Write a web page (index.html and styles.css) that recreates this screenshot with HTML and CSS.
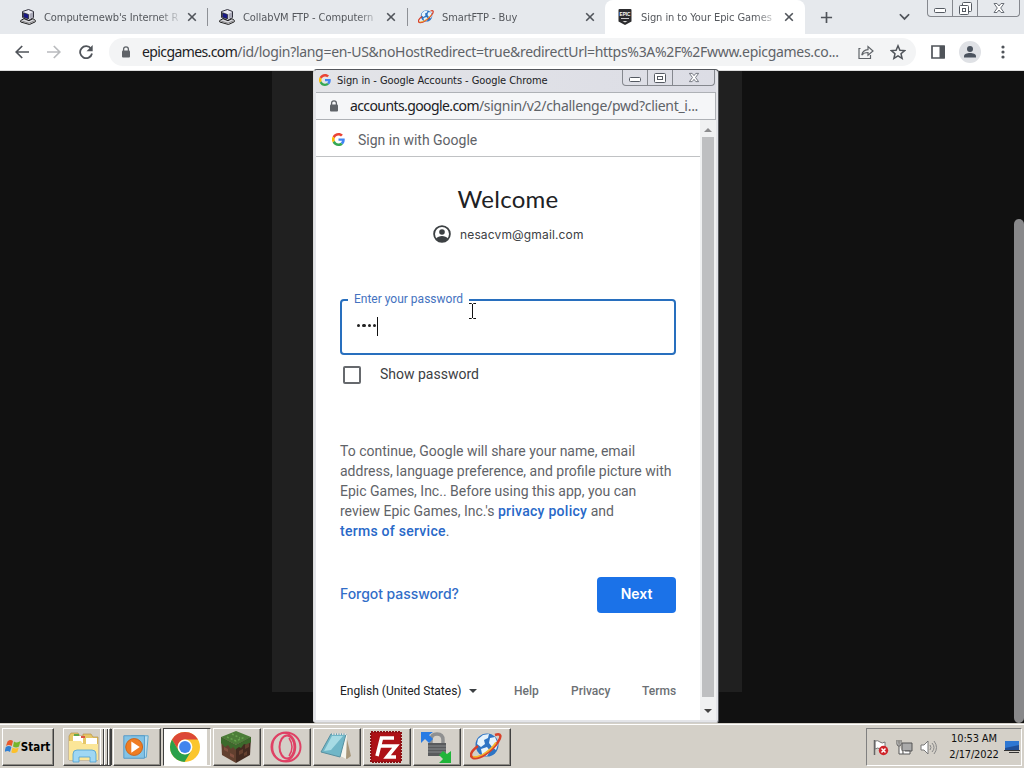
FILE: index.html
```
<!DOCTYPE html>
<html lang="en">
<head>
  <meta charset="utf-8">
  <title>Sign in to Your Epic Games Account</title>
  <link rel="stylesheet" href="styles.css">
</head>
<body>
  <svg class="defs" width="0" height="0">
    <symbol id="google" viewBox="0 0 48 48">
      <path fill="#ea4335" d="M24 9.500c3.500 0 6.700 1.200 9.200 3.600l6.900-6.900C35.900 2.400 30.500 0 24 0 14.600 0 6.500 5.400 2.600 13.200l8 6.200C12.400 13.700 17.700 9.500 24 9.500z"/>
      <path fill="#4285f4" d="M47 24.500c0-1.600-.2-3.100-.4-4.500H24v9h12.900c-.6 3-2.200 5.500-4.700 7.200l7.700 6C44.400 38 47 31.800 47 24.500z"/>
      <path fill="#fbbc05" d="M10.500 28.600a14 14 0 0 1 0-9.200l-8-6.200a24 24 0 0 0 0 21.600z"/>
      <path fill="#34a853" d="M24 48c6.500 0 11.900-2.100 15.900-5.800l-7.700-6c-2.200 1.500-4.900 2.300-8.200 2.300-6.300 0-11.600-4.200-13.500-9.900l-8 6.200C6.500 42.600 14.600 48 24 48z"/>
    </symbol>
    <symbol id="computer" viewBox="0 0 16 16">
      <path fill="#e8e8f0" stroke="#30303c" d="M2.500 2.500l6-2 5 2v6l-5 3-6-3z"/>
      <path fill="#18188a" stroke="#222" stroke-width=".7" d="M3.500 3.700l5 1.800V10l-5-1.800z"/>
      <path fill="#aaaab8" d="M9.500 5l3.500-2v5l-3.500 2z"/>
      <path fill="#d8d8dd" stroke="#222" d="M.7 11.500L4 9.700l5 2 4-2 2.300 1.600v1.500L9.500 15.500.7 13z"/>
      <path stroke="#666" stroke-width=".7" fill="none" d="M2 12l7 2.200 5-2.200"/>
    </symbol>
    <symbol id="globe" viewBox="0 0 32 32">
      <circle cx="17" cy="14" r="11.500" fill="#2d74c4"/>
      <path fill="#e6f3fc" d="M8 8l5-4 6-1-1 4-4 2 1 4-4 3-4-3zM20 7l5-1 3 7-2 6-4-3-3-4zM11 18l6-2 3 4-3 5-5-2z"/>
      <path d="M8 15C1 20-1 25 3 27c6 2 19-7 25-16 4-6 3-9-3-7" fill="none" stroke="#d8412a" stroke-width="2.500"/>
      <path d="M3 25.500c5 2 17-5 23-14" fill="none" stroke="#f5b52e" stroke-width="1.700"/>
    </symbol>
    <symbol id="close" viewBox="0 0 10 10">
      <path d="M1.200 1.200l7.600 7.600M8.800 1.200L1.200 8.800" stroke="#50545a" stroke-width="1.600" fill="none"/>
    </symbol>
    <symbol id="lock" viewBox="0 0 10 12">
      <path d="M2.600 5V3.300a2.400 2.400 0 0 1 4.800 0V5" fill="none" stroke="#5f6368" stroke-width="1.300"/>
      <rect x="1" y="4.500" width="8" height="7" rx="1" fill="#5f6368"/>
    </symbol>
    <symbol id="win-close" viewBox="0 0 12 12">
      <path d="M1 1.500h3l2 2.500 2-2.500h3L7.700 6 11 10.500H8L6 8l-2 2.500H1L4.300 6z" fill="#fff" stroke="#6b7078"/>
    </symbol>
  </svg>

  <div class="tabs">
    <div class="tab">
      <svg class="favicon"><use href="#computer"/></svg>
      <span class="tab-title">Computernewb's Internet R</span>
      <svg class="tab-close"><use href="#close"/></svg>
    </div>
    <div class="tab">
      <svg class="favicon"><use href="#computer"/></svg>
      <span class="tab-title">CollabVM FTP - Computern</span>
      <svg class="tab-close"><use href="#close"/></svg>
    </div>
    <div class="tab">
      <svg class="favicon"><use href="#globe"/></svg>
      <span class="tab-title">SmartFTP - Buy</span>
      <svg class="tab-close"><use href="#close"/></svg>
    </div>
    <div class="tab active">
      <svg class="favicon" viewBox="0 0 16 16">
        <path fill="#2c2c2e" d="M2.500 0h11q1 0 1 1v11.500L8 16l-6.500-3.500V1q0-1 1-1z"/>
        <text class="epic-logo" x="8" y="7.300" text-anchor="middle" textLength="11" lengthAdjust="spacingAndGlyphs">EPIC</text>
        <path stroke="#ccc" d="M4 9.500h8"/><path fill="#ddd" d="M5.500 12h5L8 13.500z"/>
      </svg>
      <span class="tab-title">Sign in to Your Epic Games</span>
      <svg class="tab-close"><use href="#close"/></svg>
    </div>
    <svg class="new-tab" viewBox="0 0 14 14"><path d="M7 1v12M1 7h12" stroke="#50545a" stroke-width="1.800"/></svg>
    <svg class="tab-search" viewBox="0 0 10 7"><path d="M.8 1L5 5.300 9.200 1" fill="none" stroke="#50545a" stroke-width="1.600"/></svg>
    <div class="window-buttons main-buttons">
      <span><svg width="12" height="5"><rect x=".5" y=".5" width="11" height="4" rx="1" fill="#fff" stroke="#555a62"/></svg></span>
      <span><svg width="13" height="13" fill="#fff" stroke="#555a62"><rect x="3.500" y=".5" width="9" height="9" rx="1"/><rect x=".5" y="3.500" width="9" height="9" rx="1"/><rect x="3.500" y="6.500" width="3" height="3"/></svg></span>
      <span><svg width="12" height="12"><use href="#win-close"/></svg></span>
    </div>
  </div>

  <div class="toolbar">
    <svg class="nav back" viewBox="0 0 14 14"><path d="M14 7H1.500M7.200 1L1.200 7l6 6" fill="none" stroke="#50545a" stroke-width="1.700"/></svg>
    <svg class="nav forward" viewBox="0 0 14 14"><path d="M0 7h12.500M6.800 1l6 6-6 6" fill="none" stroke="#b9bbbe" stroke-width="1.700"/></svg>
    <svg class="nav reload" viewBox="0 0 14 14"><path d="M12 3.700A6 6 0 1 0 13 8.500" fill="none" stroke="#50545a" stroke-width="1.800"/><path d="M13.700 0v6.200H7.500z" fill="#50545a"/></svg>
    <div class="omnibox">
      <svg class="lock"><use href="#lock"/></svg>
      <span class="url"><b>epicgames.com</b>/id/login?lang=en-US&amp;noHostRedirect=true&amp;redirectUrl=https%3A%2F%2Fwww.epicgames.co...</span>
      <svg class="share" viewBox="0 0 16 14"><path d="M2.500 3.500H1v10h11.500V10M3.800 10.200c.5-3.600 2.700-5.400 6.200-5.600V1.500L15 6l-5 4.300V7.500C7 7.500 5.200 8.200 3.800 10.200z" fill="none" stroke="#5f6368" stroke-width="1.200"/></svg>
      <svg class="star" viewBox="0 0 16 16"><path d="M8 1.800l1.900 4.400 4.700.4L11 9.700l1.100 4.600L8 11.800l-4.100 2.500L5 9.700 1.400 6.600l4.700-.4z" fill="none" stroke="#50545a" stroke-width="1.500"/></svg>
    </div>
    <svg class="side-panel" viewBox="0 0 14 14"><path d="M1 1h12v12H1z" fill="none" stroke="#50545a" stroke-width="1.700"/><path d="M8.500 1H14v12H8.500z" fill="#50545a"/></svg>
    <svg class="avatar" viewBox="0 0 22 22"><circle cx="11" cy="11" r="11" fill="#dfe1e5"/><circle cx="11" cy="8" r="3" fill="#4b535e"/><path d="M5 16.500v-1.300c0-2 3-3.200 6-3.200s6 1.200 6 3.200v1.300z" fill="#4b535e"/></svg>
    <svg class="menu" viewBox="0 0 4 14" fill="#50545a"><circle cx="2" cy="2" r="1.600"/><circle cx="2" cy="7" r="1.600"/><circle cx="2" cy="12" r="1.600"/></svg>
  </div>

  <div class="page">
    <div class="page-card"></div>
    <div class="page-thumb"></div>
  </div>

  <div class="popup">
    <div class="popup-title">
      <svg class="g-small"><use href="#google"/></svg>
      <span>Sign in - Google Accounts - Google Chrome</span>
      <div class="window-buttons">
        <span><svg width="12" height="5"><rect x=".5" y=".5" width="11" height="4" rx="1" fill="#fff" stroke="#555a62"/></svg></span>
        <span><svg width="12" height="10" fill="#fff" stroke="#555a62"><rect x=".5" y=".5" width="11" height="9" rx="1"/><rect x="3.500" y="3.500" width="5" height="3"/></svg></span>
        <span><svg width="12" height="11"><use href="#win-close"/></svg></span>
      </div>
    </div>
    <div class="popup-url">
      <svg class="lock"><use href="#lock"/></svg>
      <span><b>accounts.google.com</b>/signin/v2/challenge/pwd?client_i...</span>
    </div>
    <div class="popup-body">
      <div class="signin">
        <div class="signin-header">
          <svg class="g-logo"><use href="#google"/></svg>
          <span>Sign in with Google</span>
        </div>
        <h1>Welcome</h1>
        <div class="account">
          <svg viewBox="0 0 18 18"><circle cx="9" cy="9" r="7.900" fill="none" stroke="#3c4043" stroke-width="1.800"/><circle cx="9" cy="7" r="2.800" fill="#3c4043"/><path d="M3 13.500c1.300-1.800 3.600-2.600 6-2.600s4.700.8 6 2.600L12.500 16h-7z" fill="#3c4043"/></svg>
          <span>nesacvm@gmail.com</span>
        </div>
        <div class="password-field">
          <label>Enter your password</label>
          <div class="password-value"><i></i><i></i><i></i><i></i></div>
        </div>
        <div class="show-password"><span class="checkbox"></span><span>Show password</span></div>
        <p class="consent">To continue, Google will share your name, email<br>address, language preference, and profile picture with<br>Epic Games, Inc.. Before using this app, you can<br>review Epic Games, Inc.'s <a>privacy policy</a> and<br><a>terms of service</a>.</p>
        <div class="actions">
          <a>Forgot password?</a>
          <button>Next</button>
        </div>
        <div class="footer">
          <span class="language">English (United States)</span>
          <svg class="caret" viewBox="0 0 8 4"><path d="M0 0h8L4 4z" fill="#3c4043"/></svg>
          <span class="help">Help</span><span class="privacy">Privacy</span><span class="terms">Terms</span>
        </div>
      </div>
      <div class="scrollbar">
        <svg viewBox="0 0 8 4"><path d="M0 4h8L4 0z" fill="#8c8c8e"/></svg>
        <div class="thumb"></div>
        <svg viewBox="0 0 8 4"><path d="M0 0h8L4 4z" fill="#444"/></svg>
      </div>
    </div>
  </div>
  <svg class="cursor" viewBox="0 0 7 16"><path d="M0 .5h2.500l1 1 1-1H7M3.500 1v14M0 15.500h2.500l1-1 1 1H7" fill="none" stroke="#111"/></svg>

  <div class="taskbar">
    <div class="task start">
      <svg viewBox="0 0 16 15"><path fill="#e8582c" d="M2.500 2.500q3-2.500 5.500-.5L6.700 7q-3-2-5.700 0z"/><path fill="#75b52c" d="M9 2.500q3 2 6.500-.5L14 7.500q-3 2-6-.1z"/><path fill="#2f7fd2" d="M.8 8Q4 6 6.400 8L5 13q-2.500-2-5.500 0z"/><path fill="#fcc02b" d="M7.600 8.500q3 2 6.200 0L12.300 13q-3 2-6 .2z"/></svg>
      <b>Start</b>
    </div>
    <div class="task explorer">
      <svg viewBox="0 0 32 32"><path fill="#e5c767" stroke="#b28c3d" stroke-width=".6" d="M1 5l2-3h7l2 3h3V3h8l2 3h5v23H1z"/><path fill="#fff" d="M5 5h10v7H5zM18 7h11v6H18z"/><path fill="#62a84b" d="M6 3h5v2H6z"/><path fill="#db5544" d="M13 5h4v2h-4z"/><path fill="#fbe698" d="M1 10h12l2 3h15v16H1z"/><path fill="#9fd7f3" stroke="#4da0d0" stroke-width=".8" d="M5 31v-8q0-4 4-4h15q4 0 4 4v8h-6v-5H11v5z"/></svg>
      <i></i><i></i><i></i>
    </div>
    <div class="task player">
      <svg viewBox="0 0 32 32"><path fill="#b9def0" stroke="#5ca6cc" d="M11 4h18l-2 23H11z"/><path fill="#83c3e5" stroke="#5398c7" d="M3 4h22v24H3z"/><circle cx="14" cy="16" r="9" fill="#ef7c22" stroke="#c8621c"/><path fill="#fff" d="M11 10l9 6-9 6z"/></svg>
    </div>
    <div class="task chrome current">
      <svg viewBox="0 0 32 32"><circle cx="16" cy="16" r="15" fill="#fbc62d"/><path fill="#dc4837" d="M3 8.500A15 15 0 0 1 29 8.500H16a7.500 7.500 0 0 0-6.500 11z"/><path fill="#2ba04b" d="M3 8.500a15 15 0 0 0 12.500 22.500L22.500 19.500A7.500 7.500 0 0 1 9.500 19.500z"/><circle cx="16" cy="16" r="7.400" fill="#fff"/><circle cx="16" cy="16" r="5.900" fill="#4285ed"/></svg>
    </div>
    <div class="task">
      <svg viewBox="0 0 32 32"><path fill="#4c7d38" d="M16 0l15 6-15 8L1 6z"/><path fill="#62402f" d="M1 6l15 8v18L2 24z"/><path fill="#432a20" d="M31 6l-15 8v18l14-8z"/><path fill="#3c6a2c" d="M1 6l15 8v5l-3-3-2 2-3-4-3 2-4-4zM31 6l-15 8v4l3-2 2 1 3-4 3 1 4-3z"/><path fill="#835040" d="M4 16l4 2v3l-4-2zM10 22l4 2v3l-4-2z"/><path fill="#65402f" d="M19 20l4-2v4l-4 2zM25 14l4-2v4l-4 2zM24 22l3-2v4l-3 1z"/><path fill="none" stroke="#68a44e" stroke-width="1.500" stroke-dasharray="2 2" d="M7 6l9 4 9-4M12 3l8 4"/></svg>
    </div>
    <div class="task">
      <svg viewBox="0 0 32 32"><g fill="none" stroke="#df4165"><circle cx="16" cy="16" r="14.500" stroke-width="2"/><ellipse cx="14" cy="16" rx="11.500" ry="14" stroke-width="1.500"/><ellipse cx="17" cy="16" rx="7.500" ry="11.500" stroke-width="2"/><path d="M19 7q6 9 0 18" stroke-width="1.500"/></g></svg>
    </div>
    <div class="task">
      <svg viewBox="0 0 32 32"><path fill="#a8977a" d="M26 4l5 21-4 3-5-2z"/><path fill="#f6f5ed" d="M23 3l4 1-1 24-6-3z"/><path fill="#70b6c7" stroke="#578f9f" d="M11 3h15l-6 23L1 21z"/><path fill="#a7dbe4" d="M12 5h11L11 19l-7 1z"/><path stroke="#ddd" stroke-width="2" stroke-dasharray="1.500 1" d="M12 3h14"/></svg>
    </div>
    <div class="task">
      <svg viewBox="0 0 32 32"><path fill="#ad1117" stroke="#8c1115" stroke-width="2" stroke-dasharray="2 1" d="M1 1h30v30H1z"/><path d="M7 25l4.500-18H24M9.500 15H18M17 15h9L17 26h9" fill="none" stroke="#fff" stroke-width="3.600"/></svg>
    </div>
    <div class="task">
      <svg viewBox="0 0 32 32"><path d="M11 14V9q0-6 6-6t6 6v5" fill="none" stroke="#8f9090" stroke-width="3.500"/><path fill="#595b5d" d="M8 12h18v13H8z"/><path stroke="#888b8d" d="M8 15h18M8 18h18M8 21h18"/><path fill="#267be4" d="M1 1h12L9 4l4 4-4 4-4-4-4 4z"/><path fill="#20b53a" d="M31 20v12H19l4-4-4-4 4-4 4 3z"/></svg>
    </div>
    <div class="task smart"><svg><use href="#globe"/></svg></div>

    <div class="tray">
      <svg width="17" height="17" viewBox="0 0 17 17"><path fill="#fff" stroke="#777" d="M3 2q3-1 5 1t5 0v7q-3 2-5 0t-5 0z"/><path d="M2.500 1v15" stroke="#666" stroke-width="1.500"/><circle cx="11.500" cy="11.500" r="4.700" fill="#cf252b"/><path d="M9.500 9.500l4 4m0-4l-4 4" stroke="#fff" stroke-width="1.500"/></svg>
      <svg width="17" height="17" viewBox="0 0 17 17"><path fill="#aaa" stroke="#555" d="M6 4h10v8H6z"/><path fill="#fff" stroke="#555" d="M9 12h5v3H7v-2M1 1v4q0 2 2 2v8h4M5 1v4q0 2-2 2M3 1v5"/></svg>
      <svg width="17" height="17" viewBox="0 0 17 17"><path fill="#fff" stroke="#777" d="M1 6h3l4-4v13l-4-4H1z"/><path fill="none" stroke="#888" d="M10 6q2 2.500 0 5M12 4q4 4.500 0 9M14 2q5 6.500 0 13"/></svg>
      <div class="clock"><span>10:53 AM</span><span>2/17/2022</span></div>
      <svg class="show-desktop" width="16" height="14" viewBox="0 0 16 14"><path fill="#2e77d3" d="M1 1h14v9H1z"/><path fill="#204f98" d="M1 8l14-3v5H1z"/><path fill="#333" d="M0 10h16v1H0zM5 12h10v1H5z"/></svg>
    </div>
  </div>
</body>
</html>
```

FILE: styles.css
```
* {
  box-sizing: border-box;
}

body {
  display: flex;
  flex-direction: column;
  width: 1024px;
  height: 768px;
  margin: 0;
  overflow: hidden;
  position: relative;
  background: #111;
  font-family: "DejaVu Sans Condensed", "DejaVu Sans", sans-serif;
  font-size: 11px;
  color: #202124;
}

svg {
  display: block;
  flex: none;
}

.defs {
  position: absolute;
}

/* Browser tabs */
.tabs {
  display: flex;
  align-items: center;
  height: 34px;
  padding-left: 8px;
  background: #e6e9ed;
  flex: none;
}

.tab {
  display: flex;
  align-items: center;
  width: 200px;
  height: 18px;
  padding-left: 12px;
  border-right: 1px solid #8e9196;
  flex: none;
}

.tab:nth-child(2) {
  padding-left: 11px;
}

.tab:nth-child(3) {
  width: 197px;
  padding-left: 10px;
  border: 0;
}

.tab.active {
  height: 34px;
  width: 200px;
  padding-left: 12px;
  border: 0;
  border-radius: 8px 8px 0 0;
  background: #fff;
}

.favicon {
  width: 16px;
  height: 16px;
}

.epic-logo {
  font: bold 6px "Liberation Sans", sans-serif;
  fill: #fff;
}

.tab-title {
  width: 136px;
  margin-left: 8px;
  padding-top: 1px;
  white-space: nowrap;
  letter-spacing: -0.07px;
  color: #55585d;
  line-height: 18px;
  -webkit-mask-image: linear-gradient(to right, #000 84%, transparent 102%);
}

.tab-close {
  width: 10px;
  height: 10px;
  margin-left: 7px;
}

.new-tab {
  width: 13px;
  height: 13px;
  margin-left: 15px;
}

.tab-search {
  width: 11px;
  height: 8px;
  margin-left: 66px;
}

.window-buttons {
  display: flex;
  height: 17px;
  border: 1px solid #85888e;
  border-top: 0;
  border-radius: 0 0 4px 4px;
}

.window-buttons span {
  display: flex;
  align-items: center;
  justify-content: center;
  width: 25px;
  border-right: 1px solid #85888e;
}

.window-buttons span:first-child {
  align-items: flex-end;
  padding-bottom: 3px;
}

.window-buttons span:last-child {
  width: 41px;
  border: 0;
}

.main-buttons {
  align-self: flex-start;
  margin-left: 17px;
}

/* Toolbar */
.toolbar {
  display: flex;
  align-items: center;
  height: 37px;
  padding: 0 0 1px 15px;
  background: #fff;
  border-bottom: 1px solid #ddd;
  flex: none;
}

.nav {
  width: 14px;
  height: 14px;
}

.forward {
  margin-left: 18px;
}

.reload {
  margin-left: 18px;
}

.omnibox {
  display: flex;
  align-items: center;
  width: 807px;
  height: 28px;
  margin-left: 16px;
  padding-left: 12px;
  border-radius: 14px;
  background: #f3f4f5;
}

.lock {
  width: 10px;
  height: 12px;
}

.url {
  width: 700px;
  margin-left: 11px;
  font-family: "Noto Sans", sans-serif;
  font-size: 14px;
  letter-spacing: -0.3px;
  white-space: nowrap;
  color: #5f6368;
}

.url b,
.popup-url b {
  font-weight: normal;
  letter-spacing: -0.6px;
  color: #202124;
}

.share {
  width: 16px;
  height: 14px;
  margin-left: 16px;
}

.star {
  width: 16px;
  height: 16px;
  margin-left: 16px;
}

.side-panel {
  width: 14px;
  height: 14px;
  margin-left: 15px;
}

.avatar {
  width: 22px;
  height: 22px;
  margin-left: 14px;
}

.menu {
  width: 4px;
  height: 14px;
  margin-left: 20px;
}

/* Page behind the popup */
.page {
  display: flex;
  height: 652px;
  padding-left: 272px;
  background: #111;
  flex: none;
}

.page-card {
  width: 470px;
  height: 621px;
  background: #202020;
}

.page-thumb {
  width: 10px;
  height: 504px;
  margin: 148px 0 0 272px;
  border-radius: 5px;
  background: #88888a;
}

/* Popup window */
.popup {
  position: absolute;
  left: 313px;
  top: 69px;
  width: 406px;
  height: 654px;
  padding: 0 2px 2px;
  border: 1px solid #55585d;
  border-left-color: #ddd;
  border-bottom-color: #ccc;
  border-radius: 4px 4px 3px 3px;
  background: #e3e4e8;
}

.popup-title {
  display: flex;
  align-items: center;
  height: 22px;
  padding: 0 0 2px 3px;
  background: linear-gradient(to right, #e3e4e8, #dcdde5);
}

.popup-title > span {
  width: 285px;
  margin-left: 6px;
  letter-spacing: -0.07px;
  white-space: nowrap;
}

.g-small {
  width: 12px;
  height: 12px;
}

.popup-title .window-buttons {
  align-self: flex-start;
  height: 16px;
}

.popup-title .window-buttons span:last-child {
  width: 41px;
}

.popup-url {
  display: flex;
  align-items: center;
  height: 28px;
  padding: 0 0 1px 13px;
  border: 1px solid #aeb1b6;
  border-left: 0;
  background: #f5f6f8;
}

.popup-url span {
  margin-left: 11px;
  font: 14px "Noto Sans", sans-serif;
  letter-spacing: -0.3px;
  white-space: nowrap;
  color: #5f6368;
}

.popup-body {
  display: flex;
  height: 600px;
  background: #fff;
}

.signin {
  width: 385px;
  font-family: Roboto, sans-serif;
  font-size: 14px;
}

.signin-header {
  display: flex;
  align-items: center;
  height: 37px;
  padding: 3px 0 0 16px;
  border-bottom: 1px solid #c0c2c4;
  color: #5f6368;
}

.signin-header span {
  margin-left: 13px;
}

.g-logo {
  width: 13px;
  height: 13px;
}

h1 {
  margin: 26px 0 0;
  font: 24px/32px Lato, sans-serif;
  letter-spacing: 0.25px;
  text-align: center;
}

.account {
  display: flex;
  align-items: center;
  height: 20px;
  margin-top: 9px;
  padding-left: 117px;
  font: 12px Inter, sans-serif;
  letter-spacing: 0.15px;
  color: #3c4043;
}

.account svg {
  width: 18px;
  height: 18px;
  margin-right: 9px;
}

.password-field {
  width: 336px;
  height: 56px;
  margin: 55px 0 0 24px;
  border: 2px solid #286fbe;
  border-radius: 4px;
}

.password-field label {
  display: block;
  width: 121px;
  height: 14px;
  margin: -9px 0 0 6px;
  padding-left: 6px;
  background: #fff;
  font-size: 12px;
  line-height: 14px;
  color: #4472c0;
}

.password-value {
  display: flex;
  align-items: center;
  width: 22px;
  height: 19px;
  gap: 2px;
  margin: 11px 0 0 14px;
  padding: 0 0 2px 1px;
  border-right: 1px solid #111;
}

.password-value i {
  width: 3.300px;
  height: 3.300px;
  border-radius: 50%;
  background: #222;
}

.show-password {
  display: flex;
  align-items: center;
  height: 20px;
  margin: 10px 0 0 27px;
  gap: 19px;
  line-height: 18px;
  color: #3c4043;
}

.show-password span:last-child {
  padding-bottom: 2px;
}

.checkbox {
  width: 18px;
  height: 18px;
  border: 2px solid #66696d;
  border-radius: 2px;
}

.consent {
  margin: 56px 0 0 24px;
  line-height: 20px;
  color: #5f6368;
  white-space: nowrap;
}

.consent a {
  font-weight: 500;
  letter-spacing: 0.27px;
  color: #2868c8;
}

.actions {
  display: flex;
  align-items: center;
  justify-content: space-between;
  width: 336px;
  margin: 36px 0 0 24px;
  font: 500 14px Inter, sans-serif;
  color: #316dc8;
}

.actions a {
  padding-bottom: 3px;
  letter-spacing: -0.06px;
}

.actions button {
  width: 79px;
  height: 36px;
  padding-bottom: 4px;
  border: 0;
  border-radius: 4px;
  background: #1b72e8;
  color: #fff;
  font: inherit;
  font-weight: 600;
}

.footer {
  display: flex;
  align-items: center;
  height: 16px;
  margin: 70px 0 0 24px;
  font-size: 12px;
  white-space: nowrap;
}

.caret {
  width: 8px;
  height: 4px;
}

.language {
  width: 129px;
}

.help,
.privacy,
.terms {
  margin-left: 37px;
  font-weight: 500;
  color: #6c7074;
}

.help {
  width: 20px;
}

.privacy {
  width: 34px;
}

.scrollbar {
  display: flex;
  flex-direction: column;
  align-items: center;
  justify-content: space-between;
  width: 16px;
  padding: 8px 0 7px;
  background: #f0f1f2;
}

.scrollbar svg {
  width: 8px;
  height: 4px;
}

.thumb {
  width: 12px;
  height: 560px;
  margin-bottom: 7px;
  background: #bebfc1;
}

.cursor {
  position: absolute;
  left: 469px;
  top: 303px;
  width: 7px;
  height: 16px;
}

/* Taskbar */
.taskbar {
  display: flex;
  align-items: flex-start;
  height: 44px;
  padding: 3px 2px 0;
  border-top: 1px solid #fff;
  background: #d4d0c8;
  box-shadow: 0 -1px #d4d0c8;
  margin-top: 1px;
  flex: none;
}

.task {
  display: flex;
  align-items: center;
  justify-content: center;
  width: 48px;
  height: 38px;
  margin-right: 2px;
  padding: 0 2px 1px 0;
  border: 1px solid;
  border-color: #fff #404040 #404040 #fff;
  box-shadow: inset -1px -1px #8e8b84;
  flex: none;
}

.task svg {
  width: 32px;
  height: 32px;
}

.task.start {
  width: 52px;
  margin-right: 9px;
  padding-right: 1px;
  gap: 0;
  font-size: 11.500px;
  color: #000;
}

.task.start svg {
  width: 16px;
  height: 15px;
}

.task.explorer {
  justify-content: flex-start;
  padding-left: 4px;
}

.explorer i {
  width: 4px;
  height: 36px;
  border-right: 1px solid #404040;
  box-shadow: inset 1px 0 #fff;
  flex: none;
}

.player svg {
  width: 30px;
  height: 30px;
}

.current {
  background: #fff;
  border-color: #404040 #fff #fff #404040;
  box-shadow: inset -3px 0 #d4d0c8;
}

.chrome svg {
  margin-right: 2px;
}

.tray {
  display: flex;
  align-items: center;
  width: 156px;
  height: 38px;
  margin-left: auto;
  padding-left: 5px;
  gap: 7px;
  border: 1px solid;
  border-color: #808080 #fff #fff #808080;
  flex: none;
}

.clock {
  display: flex;
  flex-direction: column;
  align-items: center;
  width: 52px;
  margin-left: 4px;
  line-height: 16px;
  letter-spacing: -0.15px;
  white-space: nowrap;
  color: #111;
}

.show-desktop {
  margin-left: -3px;
}
```
